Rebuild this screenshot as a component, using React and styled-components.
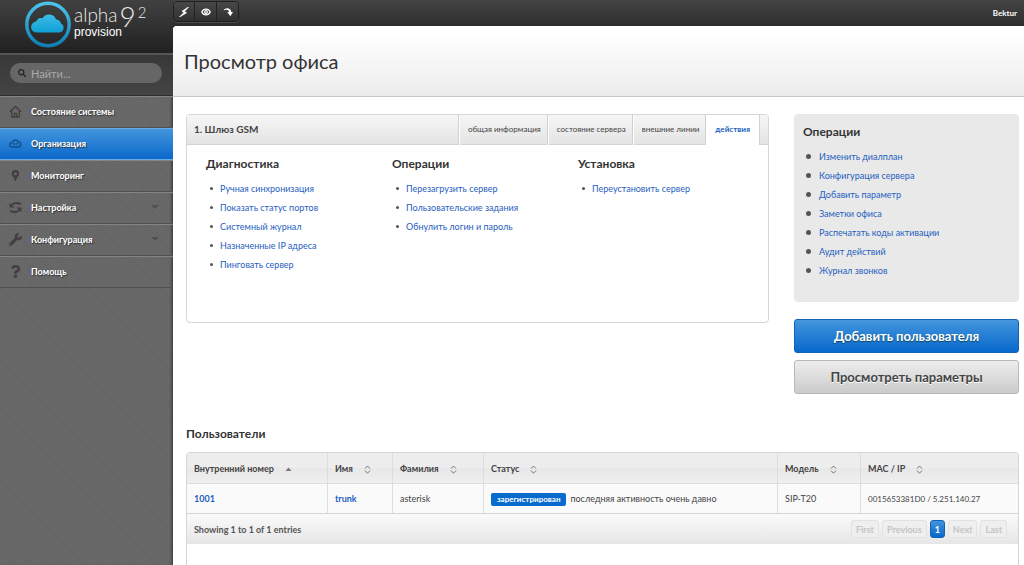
import styled, { createGlobalStyle, css } from "styled-components"
import { FaWrench, FaQuestion, FaSearch } from "react-icons/fa"

const GlobalStyle = createGlobalStyle`
    * { box-sizing: border-box; }
    body {
        margin: 0;
        background: #fff;
        color: #444;
        font: 9px/19px Lato, "Open Sans", sans-serif;
    }
    a { color: #1f60c0; text-decoration: none; }
    h1, h2, h3, ul, p { margin: 0; padding: 0; }
    button, input { font-family: inherit; }
`

const Shell = styled.div`
    display: flex;
    min-height: 100vh;
`

const Sidebar = styled.aside`
    flex: 0 0 173px;
    min-width: 0;
    background: repeating-linear-gradient(45deg, #646464 0 1px, #696969 1px 3px);
    box-shadow: inset -3px 0 3px -2px rgba(0, 0, 0, 0.5);
`

const Brand = styled.div`
    display: flex;
    gap: 2px;
    height: 53px;
    padding: 1px 0 0 25px;
    background: linear-gradient(#414141, #212121);
`

const BrandText = styled.div`
    padding-top: 2px;
    color: #e8e8e8;
`

const BrandTop = styled.div`
    display: flex;
    align-items: flex-start;
    gap: 2px;
    height: 22px;
    font-size: 19px;
    line-height: 24px;
    font-weight: 300;
`

const Nine = styled.span`
    font-size: 28px;
    line-height: 26px;
`

const Squared = styled.span`
    font-size: 15px;
    line-height: 18px;
`

const BrandBottom = styled.div`
    font: 12px/15px "Liberation Sans", Arial, sans-serif;
    color: #fff;
`

const SearchArea = styled.div`
    height: 43px;
    padding: 8px 11px 0 10px;
    border-top: 2px solid #555;
    border-bottom: 1px solid #2e2e2e;
    background: linear-gradient(#383838, #444);
`

const SearchBox = styled.label`
    display: flex;
    align-items: center;
    gap: 5px;
    height: 20px;
    padding: 0 8px;
    border-radius: 10px;
    background: #666;
    color: #222;
`

const SearchInput = styled.input`
    flex: 1;
    width: 100%;
    min-width: 0;
    border: none;
    outline: none;
    padding: 0;
    background: none;
    color: #eee;
    font-size: 11px;
    &::placeholder { color: #aaa; opacity: 1; }
`

const MenuItem = styled.a`
    display: flex;
    align-items: center;
    gap: 9px;
    height: 32px;
    padding: 0 14px 2px 9px;
    border-top: 1px solid #858585;
    border-bottom: 1px solid #505050;
    color: #fff;
    font-weight: 700;
    text-shadow: 1px 1px 1px #333;
    svg { flex: none; color: #404040; }
    ${p => p.$active && css`
        background: linear-gradient(#4394dc, #0b69cb);
        border-color: #6aaae6 #0a5cb4;
        svg { color: #124f8c; }
    `}
`

const MenuLabel = styled.span`
    flex: 1;
`

const Caret = styled.i`
    border: 4px solid transparent;
    border-top-color: #505050;
    border-bottom: none;
`

const Main = styled.main`
    flex: 1;
    min-width: 0;
    display: flex;
    flex-direction: column;
    background: linear-gradient(#444, #2d2d2d 26px, #2d2d2d);
`

const TopBar = styled.div`
    display: flex;
    justify-content: space-between;
    height: 26px;
    padding-top: 1px;
`

const Tools = styled.div`
    display: flex;
    height: 21px;
    border: 1px solid #202020;
    border-radius: 4px;
    overflow: hidden;
    box-shadow: 0 1px 0 #4a4a4a;
`

const Tool = styled.button`
    display: flex;
    align-items: center;
    justify-content: center;
    width: 20px;
    padding: 0;
    border: none;
    background: linear-gradient(#484848, #303030);
    color: #fff;
    & + & { width: 22px; border-left: 1px solid #222; }
`

const User = styled.a`
    padding: 3px 7px 0 0;
    color: #fff;
    font-size: 8px;
    font-weight: 700;
`

const Page = styled.div`
    flex: 1;
    display: flex;
    flex-direction: column;
    background: #fff;
    border-radius: 4px 0 0 0;
    overflow: hidden;
`

const PageHeader = styled.header`
    height: 71px;
    padding: 23px 11px;
    border-bottom: 1px solid #c8c8c8;
    background: linear-gradient(#fff 10%, #ececec);
`

const PageTitle = styled.h1`
    color: #333;
    font-size: 20px;
    line-height: 24px;
    font-weight: 400;
`

const Content = styled.div`
    flex: 1;
    display: flex;
    flex-direction: column;
    padding: 17px 5px 0 13px;
`

const Columns = styled.div`
    display: flex;
    align-items: flex-start;
    gap: 25px;
`

const Panel = styled.section`
    flex: 1;
    min-width: 0;
    border: 1px solid #d6d6d6;
    border-radius: 4px;
`

const PanelHeader = styled.div`
    display: flex;
    height: 30px;
    padding-right: 8px;
    border-bottom: 1px solid #d4d4d4;
    border-radius: 3px 3px 0 0;
    background: linear-gradient(#f6f6f6, #e4e4e4);
    line-height: 28px;
`

const PanelTitle = styled.h2`
    flex: 1;
    padding-left: 7px;
    font-size: 10px;
    line-height: 28px;
`

const Tab = styled.a`
    height: 30px;
    padding: 0 6px 0 9px;
    border-left: 1px solid #d0d0d0;
    box-shadow: inset 1px 0 0 #fff;
    color: #444;
    font-size: 8px;
    ${p => p.$active && css`
        padding: 0 9px;
        background: #fff;
        border-right: 1px solid #d4d4d4;
        color: #1b62c0;
        font-weight: 700;
    `}
`

const PanelBody = styled.div`
    display: grid;
    grid-template-columns: repeat(3, 186px);
    min-height: 177px;
    padding: 9px 0 0 19px;
`

const Heading = styled.h3`
    color: #333;
    font-size: 12px;
    line-height: 19px;
`

const Links = styled.ul`
    padding-top: 6px;
    list-style: none;
    li {
        display: flex;
        align-items: center;
    }
    li::before {
        content: "";
        width: ${p => p.$big ? 5 : 3}px;
        height: ${p => p.$big ? 5 : 3}px;
        margin: ${p => p.$big ? "0 8px 0 3px" : "0 7px 0 4px"};
        border-radius: 50%;
        background: #555;
    }
`

const Side = styled.aside`
    flex: 0 0 225px;
    display: flex;
    flex-direction: column;
`

const SideBox = styled.section`
    min-height: 188px;
    margin-bottom: 17px;
    padding: 8px 9px;
    border-radius: 4px;
    background: #e9e9e9;
`

const BigButton = styled.button`
    height: 34px;
    margin-bottom: 7px;
    border: 1px solid #b9b9b9;
    border-radius: 3px;
    background: linear-gradient(#ededed, #cbcbcb);
    color: #444;
    font-size: 13px;
    font-weight: 700;
    text-shadow: 0 1px 0 #fff;
    ${p => p.$primary && css`
        border-color: #1263b5;
        background: linear-gradient(#4496dd, #0768cc);
        color: #fff;
        text-shadow: 0 1px 1px #145;
    `}
`

const Users = styled.section`
    flex: 1;
    display: flex;
    flex-direction: column;
    margin-top: 23px;
`

const TableCard = styled.div`
    flex: 1;
    margin-top: 9px;
    border: 1px solid #d6d6d6;
    border-bottom: none;
    border-radius: 4px 4px 0 0;
`

const Table = styled.table`
    width: 100%;
    table-layout: fixed;
    border-collapse: separate;
    border-spacing: 0;
    th, td {
        height: 30px;
        padding: 0 0 0 7px;
        border-left: 1px solid #ddd;
        text-align: left;
        white-space: nowrap;
    }
    th:first-child, td:first-child { border-left: none; }
    th {
        height: 31px;
        border-bottom: 1px solid #ddd;
        background: linear-gradient(#ededed 50%, #e7e7e7 50%, #efefef);
    }
    td {
        background: #fafafa;
        border-bottom: 1px solid #d4d4d4;
    }
`

const Col = styled.col`
    width: ${p => p.$w ? p.$w + "px" : "auto"};
`

const Sort = styled.svg`
    margin-left: 11px;
    vertical-align: middle;
`

const Badge = styled.span`
    display: inline-block;
    margin-right: 4px;
    padding: 0 6px;
    border-radius: 2px;
    background: #0a6bce;
    color: #fff;
    font-size: 8px;
    line-height: 13px;
    font-weight: 700;
`

const Mac = styled.span`
    font-size: 8px;
`

const UserLink = styled.a`
    font-weight: 700;
`

const TableFooter = styled.div`
    display: flex;
    align-items: center;
    justify-content: space-between;
    height: 30px;
    padding: 0 11px 0 7px;
    background: linear-gradient(#fafafa, #e6e6e6);
    font-weight: 700;
    color: #555;
`

const Pager = styled.nav`
    display: flex;
    gap: 3px;
`

const PageButton = styled.button`
    height: 18px;
    padding: 0 4px;
    border: 1px solid #e2e2e2;
    border-radius: 3px;
    background: #efefef;
    color: #c4c4c4;
    font-size: 9px;
    font-weight: 700;
    ${p => p.$current && css`
        border-color: #1263b5;
        background: linear-gradient(#4394dc, #0768cc);
        color: #fff;
    `}
`

const Logo = () => (
    <svg width="47" height="48" viewBox="0 0 47 48">
        <defs>
            <linearGradient id="ring" x1="0" y1="0" x2="0" y2="1">
                <stop offset="0" stopColor="#4cc4ea" />
                <stop offset="1" stopColor="#0f7fb4" />
            </linearGradient>
            <linearGradient id="cloud" x1="0" y1="0" x2="0" y2="1">
                <stop offset="0" stopColor="#3dbce6" />
                <stop offset="1" stopColor="#0fa0d6" />
            </linearGradient>
        </defs>
        <circle cx="23" cy="23.5" r="21.2" fill="none" stroke="url(#ring)" strokeWidth="3.4" />
        <path d="M12 31.500a5.500 5.500 0 0 1-.8-11 5.500 5.500 0 0 1 6.300-3.200 7.500 7.500 0 0 1 13.500 1 6.300 6.300 0 0 1 5 4.200 4.800 4.800 0 0 1-1.500 9z" fill="url(#cloud)" />
    </svg>
)

const HomeIcon = () => (
    <svg width="13" height="13" viewBox="0 0 13 13" fill="none" stroke="currentColor" strokeWidth="1.3">
        <path d="M1 6.800 6.500 1.500 12 6.800M2.700 5.800V12h7.600V5.800M5.300 12V8.500h2.400V12" />
    </svg>
)

const CloudIcon = () => (
    <svg width="13" height="13" viewBox="0 0 13 13" fill="none" stroke="currentColor" strokeWidth="1.5">
        <path d="M3.200 10a2.300 2.300 0 0 1 .1-4.600 3.300 3.300 0 0 1 5.900-.8 2.800 2.800 0 0 1 .7 5.400zM4.500 7.500l1.700-1M7.500 7.400l1.400-1.700" />
    </svg>
)

const PinIcon = () => (
    <svg width="13" height="13" viewBox="0 0 13 13" fill="currentColor">
        <path fillRule="evenodd" d="M6.500 1a3.700 3.700 0 0 0-3.700 3.700C2.800 7.300 5.600 8 6 12h1c.4-4 3.200-4.700 3.200-7.300A3.700 3.700 0 0 0 6.500 1zm0 2.300a1.500 1.500 0 1 1 0 3 1.500 1.500 0 0 1 0-3z" />
    </svg>
)

const CycleIcon = () => (
    <svg width="13" height="13" viewBox="0 0 13 13" fill="none" stroke="currentColor" strokeWidth="1.9">
        <path d="M2.500 4.200C5 1.500 8.500 1.600 11.800 3.200M10.500 8.800C8 11.500 4.500 11.400 1.200 9.800" />
        <path d="M.5 1.500v5h5zM12.500 11.500v-5h-5z" fill="currentColor" stroke="none" />
    </svg>
)

const BoltIcon = () => (
    <svg width="10" height="10" viewBox="0 0 10 10" fill="currentColor">
        <path d="M9.500 0 3 4.300 5 5.500.5 10 7.500 5.800 5.400 4.500z" stroke="currentColor" strokeWidth=".8" />
    </svg>
)

const EyeIcon = () => (
    <svg width="10" height="10" viewBox="0 0 10 10" fill="none" stroke="currentColor" strokeWidth="1.3">
        <path d="M.8 5C2.600 1.200 7.400 1.200 9.200 5 7.400 8.800 2.600 8.800.8 5z" />
        <circle cx="5" cy="5" r="1.3" />
    </svg>
)

const ForwardIcon = () => (
    <svg width="10" height="10" viewBox="0 0 10 10" fill="currentColor">
        <path d="M.5 3.500C2 .2 7.800.2 8.300 5H10L7.300 9.200 4.300 5h1.800C5.800 3 3.300 2 .5 3.500z" />
    </svg>
)

const SortIcon = ({ asc }) => (
    <Sort width="7" height="9" viewBox="0 0 7 9">
        {asc
            ? <path d="M.5 6h6l-3-3.500z" fill="#777" />
            : <path d="M1 3.600 3.500 1 6 3.600M1 5.600 3.500 8.200 6 5.600" fill="none" stroke="#777" />}
    </Sort>
)

const menu = [
    { label: "Состояние системы", icon: <HomeIcon /> },
    { label: "Организация", icon: <CloudIcon />, active: true },
    { label: "Мониторинг", icon: <PinIcon /> },
    { label: "Настройка", icon: <CycleIcon />, sub: true },
    { label: "Конфигурация", icon: <FaWrench size={13} />, sub: true },
    { label: "Помощь", icon: <FaQuestion size={13} /> },
]

const tabs = ["общая информация", "состояние сервера", "внешние линии", "действия"]

const groups = [
    { title: "Диагностика", items: ["Ручная синхронизация", "Показать статус портов", "Системный журнал", "Назначенные IP адреса", "Пинговать сервер"] },
    { title: "Операции", items: ["Перезагрузить сервер", "Пользовательские задания", "Обнулить логин и пароль"] },
    { title: "Установка", items: ["Переустановить сервер"] },
]

const operations = ["Изменить диалплан", "Конфигурация сервера", "Добавить параметр", "Заметки офиса", "Распечатать коды активации", "Аудит действий", "Журнал звонков"]

const columns = [
    { label: "Внутренний номер", width: 140 },
    { label: "Имя", width: 65 },
    { label: "Фамилия", width: 91 },
    { label: "Статус" },
    { label: "Модель", width: 83 },
    { label: "MAC / IP", width: 158 },
]

const LinkList = ({ items, big }) => (
    <Links $big={big}>
        {items.map(item => <li key={item}><a href="#">{item}</a></li>)}
    </Links>
)

export default function App() {
    return (
        <Shell>
            <GlobalStyle />
            <Sidebar>
                <Brand>
                    <Logo />
                    <BrandText>
                        <BrandTop>
                            alpha <Nine>9</Nine><Squared>2</Squared>
                        </BrandTop>
                        <BrandBottom>provision</BrandBottom>
                    </BrandText>
                </Brand>
                <SearchArea>
                    <SearchBox>
                        <FaSearch size={8} />
                        <SearchInput type="text" placeholder="Найти..." aria-label="Найти" />
                    </SearchBox>
                </SearchArea>
                <nav>
                    {menu.map(item => (
                        <MenuItem href="#" key={item.label} $active={item.active}>
                            {item.icon}
                            <MenuLabel>{item.label}</MenuLabel>
                            {item.sub && <Caret />}
                        </MenuItem>
                    ))}
                </nav>
            </Sidebar>
            <Main>
                <TopBar>
                    <Tools>
                        <Tool aria-label="Действия"><BoltIcon /></Tool>
                        <Tool aria-label="Просмотр"><EyeIcon /></Tool>
                        <Tool aria-label="Вперёд"><ForwardIcon /></Tool>
                    </Tools>
                    <User href="#">Bektur</User>
                </TopBar>
                <Page>
                    <PageHeader>
                        <PageTitle>Просмотр офиса</PageTitle>
                    </PageHeader>
                    <Content>
                        <Columns>
                            <Panel>
                                <PanelHeader>
                                    <PanelTitle>1. Шлюз GSM</PanelTitle>
                                    {tabs.map(tab => <Tab href="#" key={tab} $active={tab === "действия"}>{tab}</Tab>)}
                                </PanelHeader>
                                <PanelBody>
                                    {groups.map(group => (
                                        <div key={group.title}>
                                            <Heading>{group.title}</Heading>
                                            <LinkList items={group.items} />
                                        </div>
                                    ))}
                                </PanelBody>
                            </Panel>
                            <Side>
                                <SideBox>
                                    <Heading>Операции</Heading>
                                    <LinkList items={operations} big />
                                </SideBox>
                                <BigButton $primary>Добавить пользователя</BigButton>
                                <BigButton>Просмотреть параметры</BigButton>
                            </Side>
                        </Columns>
                        <Users>
                            <Heading>Пользователи</Heading>
                            <TableCard>
                                <Table>
                                    <colgroup>
                                        {columns.map(col => <Col key={col.label} $w={col.width} />)}
                                    </colgroup>
                                    <thead>
                                        <tr>
                                            {columns.map((col, i) => (
                                                <th key={col.label}>{col.label}<SortIcon asc={i === 0} /></th>
                                            ))}
                                        </tr>
                                    </thead>
                                    <tbody>
                                        <tr>
                                            <td><UserLink href="#">1001</UserLink></td>
                                            <td><UserLink href="#">trunk</UserLink></td>
                                            <td>asterisk</td>
                                            <td><Badge>зарегистрирован</Badge>последняя активность очень давно</td>
                                            <td>SIP-T20</td>
                                            <td><Mac>0015653381D0 / 5.251.140.27</Mac></td>
                                        </tr>
                                    </tbody>
                                </Table>
                                <TableFooter>
                                    <span>Showing 1 to 1 of 1 entries</span>
                                    <Pager>
                                        {["First", "Previous", "1", "Next", "Last"].map(label => (
                                            <PageButton key={label} $current={label === "1"}>{label}</PageButton>
                                        ))}
                                    </Pager>
                                </TableFooter>
                            </TableCard>
                        </Users>
                    </Content>
                </Page>
            </Main>
        </Shell>
    )
}
